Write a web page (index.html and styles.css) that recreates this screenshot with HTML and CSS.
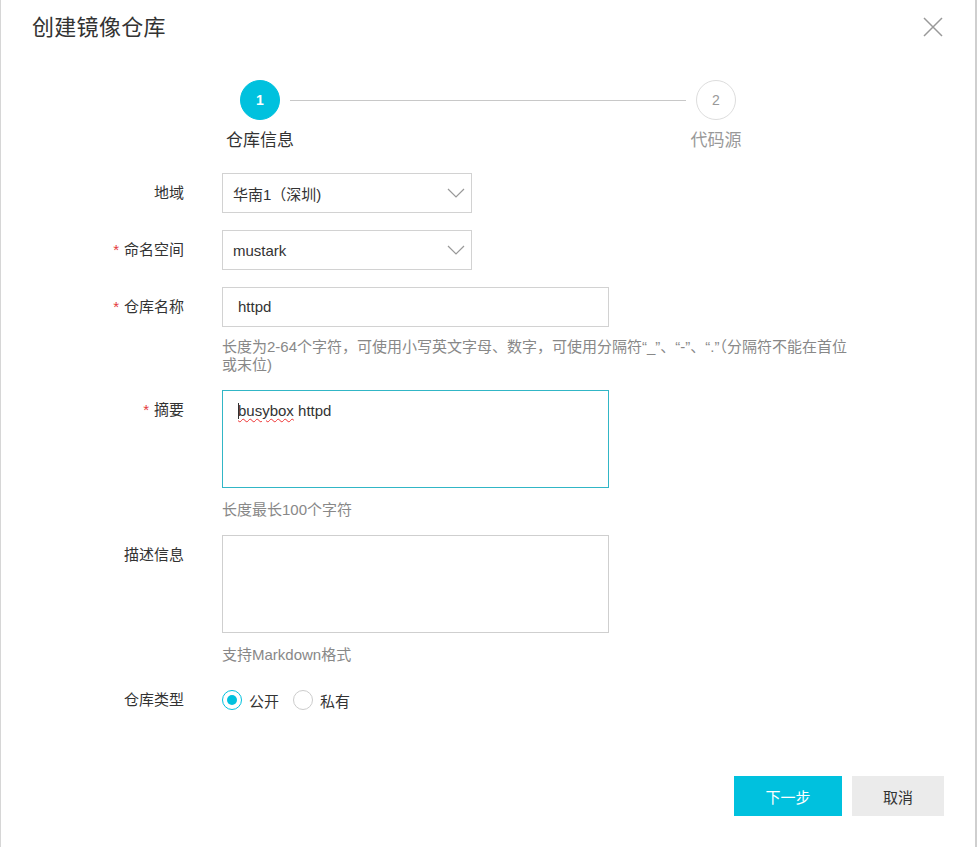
FILE: index.html
```html
<!DOCTYPE html>
<html lang="zh-CN">
<head>
<meta charset="utf-8">
<title>创建镜像仓库</title>
<link rel="stylesheet" href="styles.css">
</head>
<body>
<div class="dialog">
  <div class="header">
    <h1 class="title">创建镜像仓库</h1>
    <span class="close" aria-label="关闭">
      <svg width="20" height="20" viewBox="0 0 20 20"><path d="M1 1L19 19M19 1L1 19" stroke="#999" stroke-width="1.5" fill="none"/></svg>
    </span>
  </div>

  <div class="steps">
    <div class="step active">
      <div class="step-dot">1</div>
      <div class="step-label">仓库信息</div>
    </div>
    <div class="step-line"></div>
    <div class="step">
      <div class="step-dot">2</div>
      <div class="step-label">代码源</div>
    </div>
  </div>

  <div class="form">
    <div class="item">
      <div class="label">地域</div>
      <div class="control">
        <div class="select">
          <span>华南1（深圳)</span>
          <svg class="chev" width="18" height="10" viewBox="0 0 18 10"><path d="M1 1L9 9L17 1" stroke="#999" stroke-width="1.2" fill="none"/></svg>
        </div>
      </div>
    </div>

    <div class="item">
      <div class="label"><span class="req">*</span>命名空间</div>
      <div class="control">
        <div class="select">
          <span>mustark</span>
          <svg class="chev" width="18" height="10" viewBox="0 0 18 10"><path d="M1 1L9 9L17 1" stroke="#999" stroke-width="1.2" fill="none"/></svg>
        </div>
      </div>
    </div>

    <div class="item">
      <div class="label"><span class="req">*</span>仓库名称</div>
      <div class="control">
        <div class="input">httpd</div>
        <div class="help wide">长度为2-64个字符，可使用小写英文字母、数字，可使用分隔符“_”、“-”、“.”（分隔符不能在首位或末位)</div>
      </div>
    </div>

    <div class="item">
      <div class="label"><span class="req">*</span>摘要</div>
      <div class="control">
        <div class="textarea focus"><span class="caret"></span><span class="typo">busybox</span> httpd</div>
        <div class="help">长度最长100个字符</div>
      </div>
    </div>

    <div class="item">
      <div class="label">描述信息</div>
      <div class="control">
        <div class="textarea"></div>
        <div class="help">支持Markdown格式</div>
      </div>
    </div>

    <div class="item">
      <div class="label">仓库类型</div>
      <div class="control radios">
        <label class="radio checked"><span class="radio-box"></span>公开</label>
        <label class="radio"><span class="radio-box"></span>私有</label>
      </div>
    </div>
  </div>

  <div class="footer">
    <button class="btn primary">下一步</button>
    <button class="btn">取消</button>
  </div>
</div>
</body>
</html>
```

FILE: styles.css
```css
* { box-sizing: border-box; }
html, body {
  margin: 0;
  padding: 0;
  background: #fff;
}
body {
  font-family: "Liberation Sans", "Noto Sans CJK SC", sans-serif;
  font-size: 15px;
  color: #333;
}
.dialog {
  width: 977px;
  height: 847px;
  border-left: 1px solid #d6d6d6;
  border-right: 2px solid #cfcfcf;
  background: #fff;
  position: relative;
}
.header {
  display: flex;
  justify-content: space-between;
  align-items: center;
  height: 52px;
  padding: 0 32px 0 31px;
}
.title {
  margin: 0 0 2px;
  font-size: 22px;
  font-weight: normal;
  color: #333;
  letter-spacing: 0.3px;
}
.close {
  display: flex;
  margin-top: 1px;
}
.steps {
  display: flex;
  width: 536px;
  margin: 28px 0 0 219px;
}
.step {
  width: 80px;
  display: flex;
  flex-direction: column;
  align-items: center;
}
.step-dot {
  width: 40px;
  height: 40px;
  border-radius: 50%;
  border: 1px solid #ddd;
  color: #999;
  font-size: 14px;
  display: flex;
  align-items: center;
  justify-content: center;
}
.step.active .step-dot {
  background: #00c1de;
  border-color: #00c1de;
  color: #fff;
  font-weight: bold;
}
.step-label {
  margin-top: 9px;
  font-size: 17px;
  line-height: 24px;
  color: #999;
  white-space: nowrap;
}
.step.active .step-label { color: #333; }
.step-line {
  flex: 1;
  height: 1px;
  background: #c8c8c8;
  margin: 20px -10px 0;
}
.form {
  margin-top: 20px;
}
.item {
  display: flex;
  margin-bottom: 17px;
}
.item:nth-child(3), .item:nth-child(4), .item:nth-child(5) { margin-bottom: 16px; }
.label {
  width: 183px;
  text-align: right;
  line-height: 40px;
  color: #333;
  flex: none;
}
.req {
  color: #e4393c;
  margin-right: 5px;
}
.control {
  margin-left: 38px;
}
.select {
  width: 250px;
  height: 40px;
  border: 1px solid #d2d2d2;
  display: flex;
  align-items: center;
  justify-content: space-between;
  padding: 0 6px 0 10px;
}
.input {
  width: 387px;
  height: 40px;
  border: 1px solid #d2d2d2;
  line-height: 38px;
  padding-left: 15px;
}
.textarea {
  width: 387px;
  height: 98px;
  border: 1px solid #cfcfcf;
  padding: 10px 15px;
  line-height: 20px;
}
.textarea.focus { border-color: #31b6c6; }
.caret {
  display: inline-block;
  width: 1px;
  height: 16px;
  background: #333;
  vertical-align: -3px;
  margin-right: -1px;
}
.typo {
  text-decoration: underline wavy #e33;
  text-underline-offset: 2px;
  text-decoration-thickness: 1px;
}
.help {
  margin-top: 13px;
  line-height: 18px;
  color: #888;
}
.help.wide { width: 632px; margin-top: 11px; }
.radios {
  display: flex;
  align-items: center;
  height: 40px;
}
.radio {
  display: flex;
  align-items: center;
  margin-right: 14px;
  color: #333;
}
.radio-box {
  width: 20px;
  height: 20px;
  border-radius: 50%;
  border: 1px solid #ccc;
  margin-right: 7px;
  display: flex;
  align-items: center;
  justify-content: center;
}
.radio.checked .radio-box { border-color: #00c1de; }
.radio.checked .radio-box::after {
  content: "";
  width: 10px;
  height: 10px;
  border-radius: 50%;
  background: #00c1de;
}
.footer {
  display: flex;
  justify-content: flex-end;
  gap: 10px;
  padding-right: 31px;
  margin-top: 56px;
}
.btn {
  height: 40px;
  border: none;
  font-family: inherit;
  font-size: 15px;
  color: #333;
  background: #ebebeb;
  width: 92px;
  padding: 0;
}
.btn.primary {
  background: #00c1de;
  color: #fff;
  width: 108px;
}
```
